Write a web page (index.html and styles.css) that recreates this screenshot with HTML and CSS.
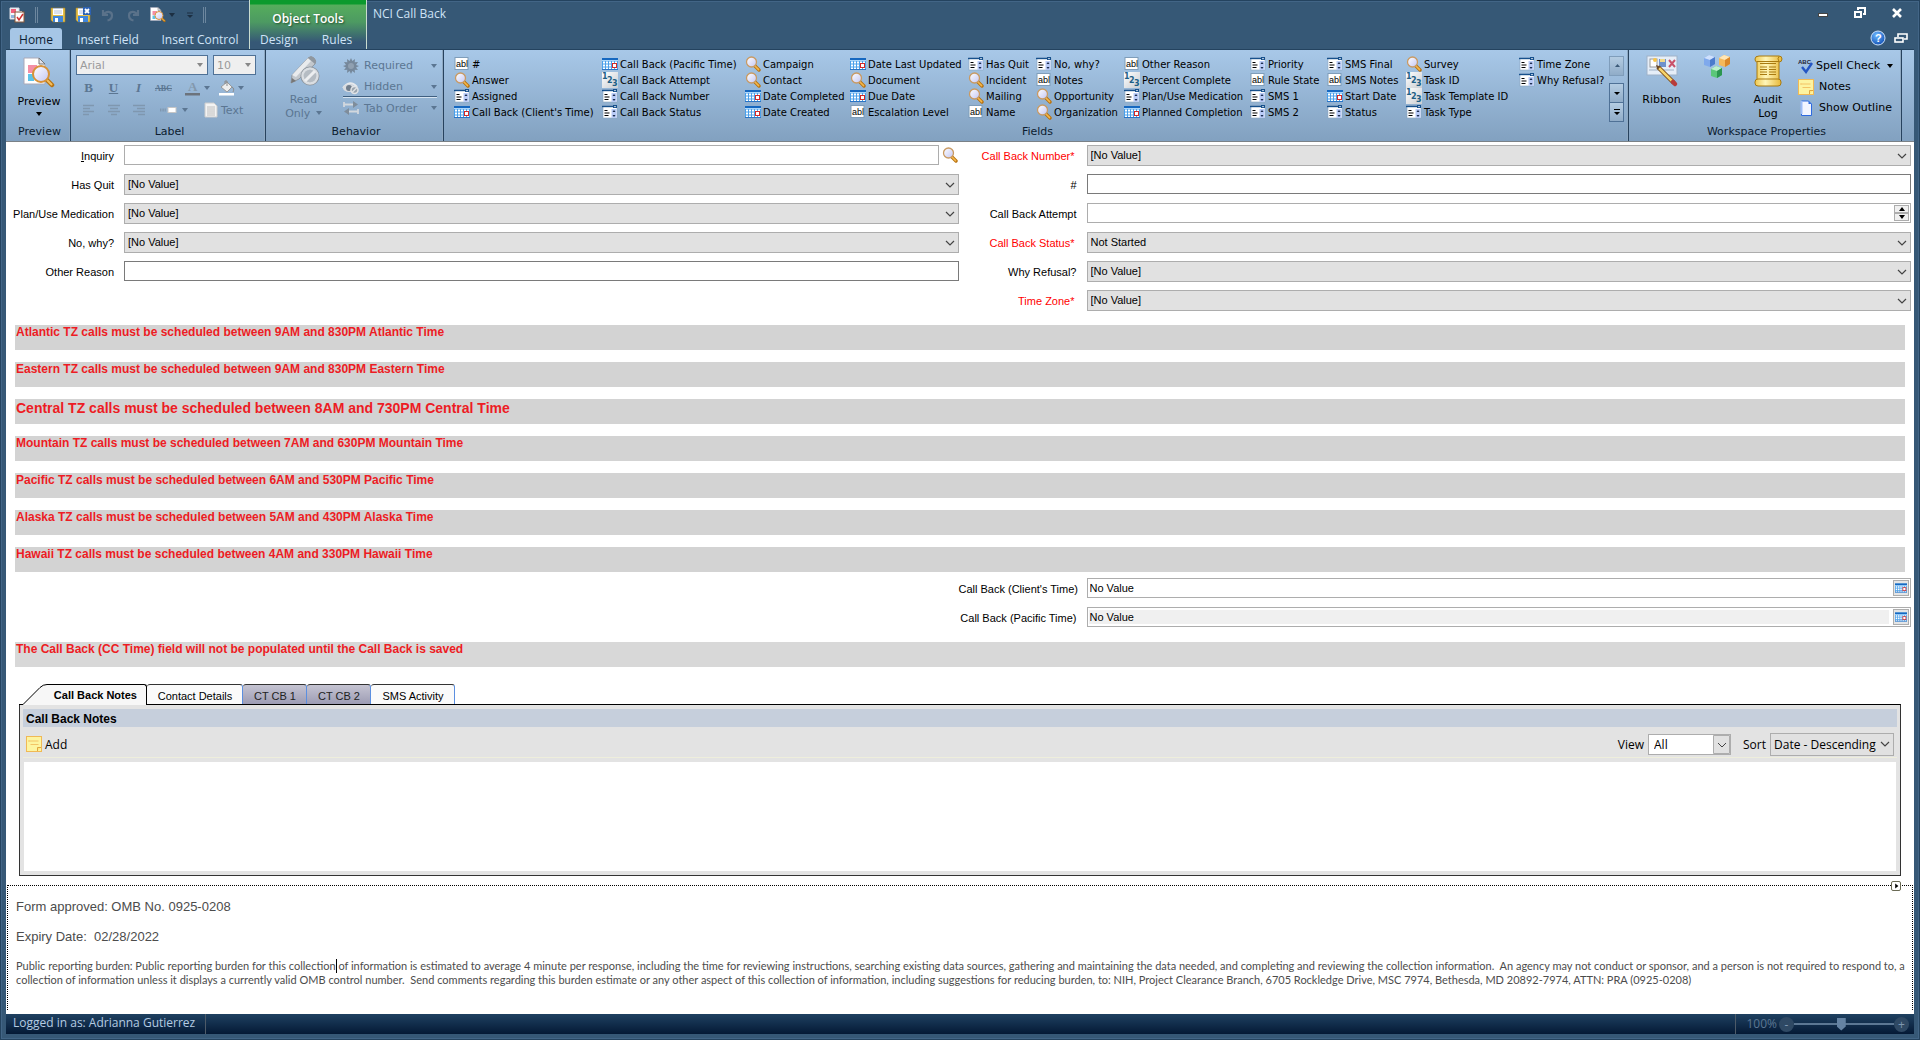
FILE: index.html
```html
<!DOCTYPE html>
<html lang="en">
<head>
    <meta charset="UTF-8">
    <meta name="viewport" content="width=device-width, initial-scale=1.0">
    <title>NCI Call Back</title>
    <link rel="stylesheet" href="styles.css">
</head>
<body>
    <!-- shared icons -->
    <svg class="sprite" aria-hidden="true">
        <defs>
            <linearGradient id="gLens" x1="0" y1="0" x2="1" y2="1"><stop offset="0" stop-color="#fff"/><stop offset="1" stop-color="#c3c6f4"/></linearGradient>
            <linearGradient id="gGray" x1="0" y1="0" x2="1" y2="1"><stop offset="0" stop-color="#fff"/><stop offset="1" stop-color="#c9cdd2"/></linearGradient>
            <linearGradient id="gGold" x1="0" y1="0" x2="1" y2="0"><stop offset="0" stop-color="#efc84f"/><stop offset=".4" stop-color="#fff6b8"/><stop offset="1" stop-color="#e8b93a"/></linearGradient>
            <radialGradient id="gHelp" cx=".4" cy=".3" r=".8"><stop offset="0" stop-color="#6db8ff"/><stop offset="1" stop-color="#0a48b0"/></radialGradient>
        </defs>
        <symbol id="abl" viewBox="0 0 16 16">
            <rect x="1" y="1.500" width="13" height="12" fill="#fff" stroke="#7f9db9"/>
            <text x="2" y="11" font-family="Liberation Sans" font-size="9" fill="#000">abl</text>
        </symbol>
        <symbol id="lens" viewBox="0 0 16 16">
            <path d="M9.500 9.500L14 14" stroke="#b8720f" stroke-width="3.400" stroke-linecap="round"/>
            <path d="M9.500 9.500L13.600 13.600" stroke="#f5b84d" stroke-width="1.500" stroke-linecap="round"/>
            <circle cx="6.500" cy="6" r="5" fill="url(#gLens)" stroke="#c99a62" stroke-width="1.300"/>
        </symbol>
        <symbol id="combo" viewBox="0 0 16 16">
            <rect x="1" y="2" width="14" height="12" fill="#fff" stroke="#8ba4bd" stroke-width=".6"/>
            <path d="M0 2.500h15" stroke="#16508c" stroke-width="1.400"/>
            <rect x="11" y="1" width="4" height="3" fill="#16508c"/>
            <path d="M12 2h2l-1 1.400z" fill="#fff"/>
            <rect x="9.500" y="5" width="5" height="9" fill="#b9cbf7"/>
            <path d="M10.500 8l1.500-2 1.500 2zM10.500 11l1.500 2 1.500-2z" fill="#1a2a4a"/>
            <path d="M2.500 6.500h3M2.500 9h5M2.500 11.500h4" stroke="#000" stroke-width="1.200"/>
        </symbol>
        <symbol id="cal" viewBox="0 0 16 16">
            <rect x="0" y="2" width="16" height="12" fill="#4ba0ea"/>
            <rect x="0" y="2" width="16" height="2" fill="#1668c0"/>
            <rect x="0" y="4" width="16" height="1" fill="#a9d6fb"/>
            <path d="M1 6.500h14M1 9.500h14M1 12.500h14" stroke="#fff" stroke-width="2" stroke-dasharray="2 1"/>
            <rect x="10.500" y="7.500" width="4" height="4" fill="#fff" stroke="#d42a2a"/>
            <path d="M0 13.500h16" stroke="#2b74c4"/>
        </symbol>
        <symbol id="num" viewBox="0 0 16 16">
            <rect width="16" height="16" fill="url(#gGray)"/>
            <g font-family="DejaVu Sans" font-weight="bold" font-size="8" fill="#1d5f86">
                <text x="0" y="7">1</text><text x="5" y="11">2</text><text x="10" y="14">3</text>
            </g>
        </symbol>
        <symbol id="note" viewBox="0 0 16 16">
            <rect x=".5" y=".5" width="15" height="15" fill="#fdf4a0" stroke="#f0b955"/>
            <path d="M3.500 5h9M4.500 8.500h8M3 4v2" stroke="#f3c466" fill="none"/>
            <path d="M11.500 15v-3.500H15" stroke="#e0a640" fill="#ffe680"/>
        </symbol>
        <symbol id="page-lens" viewBox="0 0 32 32">
            <path d="M1 1h15l6 6v20H1z" fill="#fff" stroke="#a9a9b8"/>
            <path d="M16 1v6h6z" fill="#e2e2ea" stroke="#777"/>
            <rect x="5" y="8" width="9" height="8" fill="#f48fa6"/>
            <rect x="5" y="17" width="6" height="7" fill="#5cc3e8"/>
            <path d="M24 23l5 5" stroke="#b8720f" stroke-width="4.500" stroke-linecap="round"/>
            <path d="M24 23l4.500 4.500" stroke="#f5c060" stroke-width="2" stroke-linecap="round"/>
            <circle cx="18" cy="17" r="8" fill="url(#gLens)" stroke="#d79238" stroke-width="2"/>
        </symbol>
        <symbol id="floppy" viewBox="0 0 16 16">
            <path d="M1 1h14v14H3l-2-2z" fill="#e3bf4a" stroke="#a98526" stroke-width=".6"/>
            <rect x="3" y="1" width="10" height="7" fill="#fff"/>
            <path d="M3 1.500h10M4 4h8M4 6h8" stroke="#b7c4dc"/>
            <rect x="3" y="9" width="10" height="6" fill="#3f86dc"/>
            <rect x="5" y="11" width="3" height="4" fill="#fff"/>
        </symbol>
        <symbol id="down" viewBox="0 0 6 4"><path d="M0 0h6L3 4z" fill="currentColor"/></symbol>
        <symbol id="lines-l" viewBox="0 0 14 12"><path d="M1 1.500h11M1 4.500h7M1 7.500h11M1 10.500h6" stroke="#7f97af" stroke-width="1.500"/></symbol>
        <symbol id="lines-c" viewBox="0 0 14 12"><path d="M1 1.500h12M3 4.500h8M1 7.500h12M4 10.500h6" stroke="#7f97af" stroke-width="1.500"/></symbol>
        <symbol id="lines-r" viewBox="0 0 14 12"><path d="M1 1.500h12M5 4.500h8M1 7.500h12M6 10.500h7" stroke="#7f97af" stroke-width="1.500"/></symbol>
    </svg>

    <div class="window">
        <header class="titlebar">
            <div class="title-left">
                <div class="quick">
                    <svg class="i16" viewBox="0 0 16 16"><path d="M1 1h9v11H1z" fill="#f6f8fb" stroke="#d8dbe2"/><rect x="2" y="2" width="5" height="4" fill="#f0607c"/><rect x="2" y="8" width="4" height="3" fill="#8fb5df"/><rect x="6" y="5" width="9" height="10" fill="#fff" stroke="#8b5a3a"/><rect x="8" y="4" width="5" height="2" fill="#b9a79a"/><path d="M8 10l2 3 4-6" fill="none" stroke="#d03030" stroke-width="1.500"/></svg>
                    <span class="grip"></span>
                    <button title="Save"><svg class="i16"><use href="#floppy"/></svg></button>
                    <button title="Save and Close"><svg class="i16" viewBox="0 0 16 16"><use href="#floppy"/><rect x="8" y="0" width="8" height="8" fill="#2c62b4"/><path d="M10 2l4 4M14 2l-4 4" stroke="#fff" stroke-width="1.800"/></svg></button>
                    <button title="Undo"><svg class="i16" viewBox="0 0 16 16"><path d="M3 3v5h5M3.500 8C6 3.500 12 4 12 8.500c0 3-2 4.500-4.500 5" fill="none" stroke="#5a728a" stroke-width="2.200"/></svg></button>
                    <button title="Redo"><svg class="i16" viewBox="0 0 16 16"><path d="M13 3v5H8M12.500 8C10 3.500 4 4 4 8.500c0 3 2 4.500 4.500 5" fill="none" stroke="#5a728a" stroke-width="2.200"/></svg></button>
                    <button title="Preview" class="split"><svg class="i16"><use href="#page-lens"/></svg><svg class="arrow dark"><use href="#down"/></svg></button>
                    <button title="Customize" class="more"><svg viewBox="0 0 6 7"><path d="M0 1h6" stroke="#1c2f42"/><path d="M0 3h6L3 6z" fill="#1c2f42"/></svg></button>
                    <span class="grip"></span>
                </div>
                <nav class="tabs">
                    <button class="tab active">Home</button>
                    <button class="tab">Insert Field</button>
                    <button class="tab">Insert Control</button>
                </nav>
            </div>
            <div class="context">
                <span class="context-title">Object Tools</span>
                <nav class="context-tabs">
                    <button class="tab">Design</button>
                    <button class="tab">Rules</button>
                </nav>
            </div>
            <h1>NCI Call Back</h1>
            <div class="title-right">
                <div class="win-buttons">
                    <button title="Minimize"><svg class="i14" viewBox="0 0 14 14"><rect x="2.500" y="7.500" width="9" height="3" fill="#fff" stroke="#444"/></svg></button>
                    <button title="Restore"><svg class="i14" viewBox="0 0 14 14"><path d="M5 4V2h7v6h-2" fill="none" stroke="#fff" stroke-width="2"/><rect x="2" y="6" width="6" height="5" fill="none" stroke="#fff" stroke-width="2"/></svg></button>
                    <button title="Close"><svg class="i14" viewBox="0 0 14 14"><path d="M3 3l8 8M11 3l-8 8" stroke="#fff" stroke-width="2.600"/></svg></button>
                </div>
                <div class="help-buttons">
                    <button title="Help"><svg class="i16" viewBox="0 0 16 16"><circle cx="8" cy="8" r="7" fill="url(#gHelp)" stroke="#cfe4fb"/><text x="5" y="12" font-family="Liberation Sans" font-weight="bold" font-size="11" fill="#fff">?</text></svg></button>
                    <button title="Restore Window"><svg class="i14" viewBox="0 0 14 14"><path d="M4 6V3h9v5h-3" fill="none" stroke="#fff" stroke-width="1.600"/><rect x="1" y="7" width="8" height="4" fill="none" stroke="#fff" stroke-width="1.600"/></svg></button>
                </div>
            </div>
        </header>

        <section class="ribbon">
            <div class="group g-preview">
                <button class="big">
                    <svg class="i32"><use href="#page-lens"/></svg>
                    <span>Preview</span>
                    <svg class="arrow"><use href="#down"/></svg>
                </button>
                <div class="group-name">Preview</div>
            </div>

            <div class="group g-label off">
                <div class="label-tools">
                    <div class="tool-row">
                        <select class="font-select family" disabled aria-label="Font"><option>Arial</option></select>
                        <select class="font-select size" disabled aria-label="Font size"><option>10</option></select>
                    </div>
                    <div class="tool-row format">
                        <button disabled class="letter"><b>B</b></button>
                        <button disabled class="letter"><u>U</u></button>
                        <button disabled class="letter"><i>I</i></button>
                        <button disabled class="letter abc"><s>ABC</s></button>
                        <button disabled class="color" title="Font Color"><svg class="i16" viewBox="0 0 16 16"><text x="3" y="11" font-family="Liberation Serif" font-size="13" font-weight="bold" fill="#8398ad">A</text><rect x="0" y="13" width="15" height="2.500" fill="#6c737c"/></svg><svg class="arrow"><use href="#down"/></svg></button>
                        <button disabled class="color" title="Fill Color"><svg class="i16" viewBox="0 0 16 16"><path d="M2 7l6-5 5 5-5 5z" fill="#eee" stroke="#999"/><path d="M6 4V1h2v5M13 7c2 1 2 3 1 5" fill="none" stroke="#8a8a8a"/><rect x="0" y="13" width="15" height="2.500" fill="#fff"/></svg><svg class="arrow"><use href="#down"/></svg></button>
                    </div>
                    <div class="tool-row format">
                        <button disabled class="letter" title="Left"><svg class="lines"><use href="#lines-l"/></svg></button>
                        <button disabled class="letter" title="Center"><svg class="lines"><use href="#lines-c"/></svg></button>
                        <button disabled class="letter" title="Right"><svg class="lines"><use href="#lines-r"/></svg></button>
                        <button disabled class="position" title="Label Position"><svg class="i16" viewBox="0 0 16 16"><path d="M0 8h6" stroke="#7f97af" stroke-width="3" stroke-dasharray="1 .6"/><rect x="8" y="5.500" width="8" height="5" fill="#fff" stroke="#c6c6c6"/></svg><svg class="arrow"><use href="#down"/></svg></button>
                        <button disabled class="text-button"><svg class="i16" viewBox="0 0 16 16"><path d="M2 1h9l3 3v11H2z" fill="#f3f3f3" stroke="#ccc"/><path d="M4 5h8M4 7h8M4 9h8M4 11h8M4 13h8" stroke="#b0b0b0" stroke-width=".8"/></svg>Text</button>
                    </div>
                </div>
                <div class="group-name">Label</div>
            </div>

            <div class="group g-behavior off">
                <div class="group-body">
                    <button class="big" disabled>
                        <svg class="i32" viewBox="0 0 32 32"><path d="M4 20L20 3q3-3 6 0t1 6L11 24l-8 4z" fill="#c3c8cd" stroke="#8f979f"/><path d="M4 20L20 3l3 3L8 22z" fill="#e9ebed"/><path d="M20 3q3-3 6 0t1 6z" fill="#8f979f"/><path d="M3 28l1-5 4 3z" fill="#777"/><circle cx="22" cy="21" r="8" fill="#b5bcc3" stroke="#8a929a" stroke-width="3"/><circle cx="22" cy="21" r="7.500" fill="none" stroke="#dadee2" stroke-width="2.500"/><path d="M17 26L27 16" stroke="#eceef0" stroke-width="3"/></svg>
                        <span>Read</span>
                        <span>Only <svg class="arrow"><use href="#down"/></svg></span>
                    </button>
                    <div class="stack">
                        <button class="row" disabled><svg class="i16" viewBox="0 0 16 16"><path d="M8 0l1.400 3L12 1l-.3 3.300L15 4l-2 3 3 1-3 1.500L15 12l-3.300-.3L12 15l-2.600-2L8 16l-1.400-3L4 15l.3-3.300L1 12l2-2.500L0 8l3-1-2-3 3.300.3L4 1l2.600 2z" fill="#76889b"/><circle cx="8" cy="8" r="3" fill="#90a0b1"/></svg><span>Required</span><svg class="arrow"><use href="#down"/></svg></button>
                        <button class="row" disabled><svg class="i16" viewBox="0 0 16 16"><path d="M0 9q7-9 14-1" fill="none" stroke="#e6e9ec" stroke-width="2"/><ellipse cx="6" cy="9" rx="6" ry="4" fill="#d9dce0"/><circle cx="6" cy="9" r="3" fill="#717e8c"/><circle cx="11.500" cy="11" r="3.500" fill="#9aa4ae" stroke="#e0e3e6" stroke-width="1.500"/><path d="M9 13.500l5-5" stroke="#e0e3e6" stroke-width="1.500"/></svg><span>Hidden</span><svg class="arrow"><use href="#down"/></svg></button>
                        <button class="row tab-order" disabled><svg class="i16" viewBox="0 0 16 16"><path d="M1 2v5M1 4.500h10M15 9v5M15 11.500H5" fill="none" stroke="#d2d8de" stroke-width="1.800"/><path d="M10 1l5 3.500L10 8zM6 8v7l-5-3.500z" fill="#7f8d9b"/></svg><span>Tab Order</span><svg class="arrow"><use href="#down"/></svg></button>
                    </div>
                </div>
                <div class="group-name">Behavior</div>
            </div>

            <div class="group g-fields">
                <div class="group-body">
                    <div class="fields">
                        <button><svg><use href="#abl"/></svg>#</button>
                        <button><svg><use href="#lens"/></svg>Answer</button>
                        <button><svg><use href="#combo"/></svg>Assigned</button>
                        <button><svg><use href="#cal"/></svg>Call Back (Client's Time)</button>
                        <button><svg><use href="#cal"/></svg>Call Back (Pacific Time)</button>
                        <button><svg><use href="#num"/></svg>Call Back Attempt</button>
                        <button><svg><use href="#combo"/></svg>Call Back Number</button>
                        <button><svg><use href="#combo"/></svg>Call Back Status</button>
                        <button><svg><use href="#lens"/></svg>Campaign</button>
                        <button><svg><use href="#lens"/></svg>Contact</button>
                        <button><svg><use href="#cal"/></svg>Date Completed</button>
                        <button><svg><use href="#cal"/></svg>Date Created</button>
                        <button><svg><use href="#cal"/></svg>Date Last Updated</button>
                        <button><svg><use href="#lens"/></svg>Document</button>
                        <button><svg><use href="#cal"/></svg>Due Date</button>
                        <button><svg><use href="#abl"/></svg>Escalation Level</button>
                        <button><svg><use href="#combo"/></svg>Has Quit</button>
                        <button><svg><use href="#lens"/></svg>Incident</button>
                        <button><svg><use href="#lens"/></svg>Mailing</button>
                        <button><svg><use href="#abl"/></svg>Name</button>
                        <button><svg><use href="#combo"/></svg>No, why?</button>
                        <button><svg><use href="#abl"/></svg>Notes</button>
                        <button><svg><use href="#lens"/></svg>Opportunity</button>
                        <button><svg><use href="#lens"/></svg>Organization</button>
                        <button><svg><use href="#abl"/></svg>Other Reason</button>
                        <button><svg><use href="#num"/></svg>Percent Complete</button>
                        <button><svg><use href="#combo"/></svg>Plan/Use Medication</button>
                        <button><svg><use href="#cal"/></svg>Planned Completion</button>
                        <button><svg><use href="#combo"/></svg>Priority</button>
                        <button><svg><use href="#abl"/></svg>Rule State</button>
                        <button><svg><use href="#combo"/></svg>SMS 1</button>
                        <button><svg><use href="#combo"/></svg>SMS 2</button>
                        <button><svg><use href="#combo"/></svg>SMS Final</button>
                        <button><svg><use href="#abl"/></svg>SMS Notes</button>
                        <button><svg><use href="#cal"/></svg>Start Date</button>
                        <button><svg><use href="#combo"/></svg>Status</button>
                        <button><svg><use href="#lens"/></svg>Survey</button>
                        <button><svg><use href="#num"/></svg>Task ID</button>
                        <button><svg><use href="#num"/></svg>Task Template ID</button>
                        <button><svg><use href="#combo"/></svg>Task Type</button>
                        <button><svg><use href="#combo"/></svg>Time Zone</button>
                        <button><svg><use href="#combo"/></svg>Why Refusal?</button>
                    </div>
                    <div class="scroller">
                        <button class="up" title="Up"><svg viewBox="0 0 8 8"><path d="M2 5h5L4.500 2z" fill="#3c5a78"/></svg></button>
                        <button title="Down"><svg viewBox="0 0 8 8"><path d="M1 3h6L4 6z"/></svg></button>
                        <button title="More"><svg viewBox="0 0 8 8"><path d="M1 1h6v1H1zM1 4h6L4 7z"/></svg></button>
                    </div>
                </div>
                <div class="group-name">Fields</div>
            </div>

            <div class="group g-workspace">
                <div class="group-body">
                    <button class="big">
                        <svg class="i32" viewBox="0 0 32 32"><rect x="1" y="1" width="30" height="19" fill="#e6eef8" stroke="#9fb2c8"/><rect x="4" y="4" width="7" height="8" fill="#fff" stroke="#999"/><circle cx="9" cy="5" r="2" fill="#f7c548"/><rect x="13" y="4" width="7" height="8" fill="#6f91cc"/><rect x="14" y="4" width="5" height="3" fill="#f1d98a"/><path d="M23 5l6 7M29 5l-6 7" stroke="#c9526a" stroke-width="2"/><path d="M3 15h25" stroke="#9fb2c8"/><path d="M12 12l16 16" stroke="#7b4a12" stroke-width="4.500"/><path d="M13 13l14 14" stroke="#f6d46b" stroke-width="2.500"/><path d="M10 10l4.500 1.500-3 3z" fill="#6b4a2a"/><path d="M27 27l2 2" stroke="#b83b3b" stroke-width="4.500" stroke-linecap="round"/></svg>
                        <span>Ribbon</span>
                    </button>
                    <button class="big">
                        <svg class="i32" viewBox="0 0 32 32"><path d="M3 3l5-3 6 2v7l-5 3-6-2z" fill="#7fa9ec"/><path d="M3 3l6 2 5-3-6-2z" fill="#cfe0fc"/><path d="M9 5v7l5-3V2z" fill="#4c7bcc"/><path d="M18 3l5-3 6 2v7l-5 3-6-2z" fill="#f5b95c"/><path d="M18 3l6 2 5-3-6-2z" fill="#ffe6b5"/><path d="M24 5v7l5-3V2z" fill="#d9872a"/><path d="M10 14l5-3 6 2v7l-5 3-6-2z" fill="#5bc77a"/><path d="M10 14l6 2 5-3-6-2z" fill="#bff0cb"/><path d="M16 16v7l5-3v-7z" fill="#2b9650"/></svg>
                        <span>Rules</span>
                    </button>
                    <button class="big">
                        <svg class="i32" viewBox="0 0 32 32"><path d="M3 4q0-3 4-3h20q3 0 3 3t-3 3v19H5V7q-2 0-2-3z" fill="url(#gGold)" stroke="#a87a10"/><path d="M5 6.500h22" stroke="#a87a10"/><path d="M27 1.500q-2 2 0 5" fill="none" stroke="#a87a10"/><rect x="3" y="24" width="26" height="7" rx="3" fill="url(#gGold)" stroke="#a87a10"/><path d="M8 8.500h16M8 12h7M17 12h7M8 14.500h7M17 14.500h7M8 17h7M17 17h7M8 19.500h7M17 19.500h7" stroke="#a87a10"/></svg>
                        <span>Audit</span>
                        <span>Log</span>
                    </button>
                    <div class="stack">
                        <button class="row spell"><svg class="i16" viewBox="0 0 16 16"><text x="0" y="6" font-family="Liberation Sans" font-weight="bold" font-size="6" fill="#223">ABC</text><path d="M4 9l4 5 6-9" fill="none" stroke="#2456c4" stroke-width="2.400"/></svg><span>Spell Check</span><svg class="arrow"><use href="#down"/></svg></button>
                        <button class="row"><svg class="i16"><use href="#note"/></svg><span>Notes</span></button>
                        <button class="row"><svg class="i16" viewBox="0 0 16 16"><path d="M3.500 1h7l3 3v11.500h-10z" fill="#f2f5ff" stroke="#2d6ae0"/><path d="M3.500 1v13" stroke="#9dbcf7" stroke-width="2"/><path d="M10.500 1v3h3z" fill="#2d6ae0"/></svg><span>Show Outline</span></button>
                    </div>
                </div>
                <div class="group-name">Workspace Properties</div>
            </div>
        </section>

        <main>
            <div class="form">
                <div class="column left">
                    <label for="inquiry"><u>I</u>nquiry</label>
                    <div class="lookup"><input type="text" id="inquiry" class="soft"><button title="Search"><svg class="i16"><use href="#lens"/></svg></button></div>
                    <label for="hasQuit">Has Quit</label>
                    <select id="hasQuit"><option>[No Value]</option></select>
                    <label for="medication">Plan/Use Medication</label>
                    <select id="medication"><option>[No Value]</option></select>
                    <label for="noWhy">No, why?</label>
                    <select id="noWhy"><option>[No Value]</option></select>
                    <label for="otherReason">Other Reason</label>
                    <input type="text" id="otherReason">
                </div>
                <div class="column right">
                    <label for="cbNumber" class="required">Call Back Number*</label>
                    <select id="cbNumber"><option>[No Value]</option></select>
                    <label for="number">#</label>
                    <input type="text" id="number">
                    <label for="attempt">Call Back Attempt</label>
                    <div class="boxed">
                        <input type="text" id="attempt">
                        <span class="spin">
                            <button title="Increase"><svg viewBox="0 0 6 4"><path d="M0 4h6L3 0z"/></svg></button>
                            <button title="Decrease"><svg viewBox="0 0 6 4"><path d="M0 0h6L3 4z"/></svg></button>
                        </span>
                    </div>
                    <label for="cbStatus" class="required">Call Back Status*</label>
                    <select id="cbStatus"><option>Not Started</option></select>
                    <label for="refusal">Why Refusal?</label>
                    <select id="refusal"><option>[No Value]</option></select>
                    <label for="timeZone" class="required">Time Zone*</label>
                    <select id="timeZone"><option>[No Value]</option></select>
                </div>
            </div>

            <div class="banners">
                <p>Atlantic TZ calls must be scheduled between 9AM and 830PM Atlantic Time</p>
                <p>Eastern TZ calls must be scheduled between 9AM and 830PM Eastern Time</p>
                <p class="large">Central TZ calls must be scheduled between 8AM and 730PM Central Time</p>
                <p>Mountain TZ calls must be scheduled between 7AM and 630PM Mountain Time</p>
                <p>Pacific TZ calls must be scheduled between 6AM and 530PM Pacific Time</p>
                <p>Alaska TZ calls must be scheduled between 5AM and 430PM Alaska Time</p>
                <p>Hawaii TZ calls must be scheduled between 4AM and 330PM Hawaii Time</p>
            </div>

            <div class="form dates">
                <div class="column left"></div>
                <div class="column right">
                    <label for="clientTime">Call Back (Client's Time)</label>
                    <div class="boxed"><input type="text" id="clientTime" value="No Value"><button class="pick" title="Calendar"><svg><use href="#cal"/></svg></button></div>
                    <label for="pacificTime">Call Back (Pacific Time)</label>
                    <div class="boxed"><input type="text" id="pacificTime" value="No Value" readonly><button class="pick" title="Calendar"><svg><use href="#cal"/></svg></button></div>
                </div>
            </div>

            <div class="banners saved">
                <p>The Call Back (CC Time) field will not be populated until the Call Back is saved</p>
            </div>

            <section class="notes">
                <nav class="note-tabs">
                    <button class="current"><svg viewBox="0 0 28 21"><path d="M0 21L4 20.500 20 4q4-3.500 8-3.500V21z" fill="#f7f7f7"/><path d="M0 20.500h4L21 3.500Q24 .5 28 .5" fill="none" stroke="#000"/></svg><span>Call Back Notes</span></button>
                    <button>Contact Details</button>
                    <button class="shaded">CT CB 1</button>
                    <button class="shaded">CT CB 2</button>
                    <button>SMS Activity</button>
                </nav>
                <div class="note-panel">
                    <h2>Call Back Notes</h2>
                    <div class="note-bar">
                        <button class="add"><svg class="i16"><use href="#note"/></svg>Add</button>
                        <label for="view">View</label>
                        <select id="view" class="view"><option>All</option></select>
                        <label for="sort">Sort</label>
                        <select id="sort" class="sort"><option>Date - Descending</option></select>
                    </div>
                    <div class="note-list"></div>
                </div>
            </section>

            <section class="legal">
                <button class="handle" title="Expand"><svg viewBox="0 0 10 10"><path d="M4 2v6l4-3z"/></svg></button>
                <p>Form approved: OMB No. 0925-0208</p>
                <p>Expiry Date: &nbsp;02/28/2022</p>
                <p class="small">Public reporting burden: Public reporting burden for this collection<span class="caret"></span> of information is estimated to average 4 minute per response, including the time for reviewing instructions, searching existing data sources, gathering and maintaining the data needed, and completing and reviewing the collection information. &nbsp;An agency may not conduct or sponsor, and a person is not required to respond to, a collection of information unless it displays a currently valid OMB control number. &nbsp;Send comments regarding this burden estimate or any other aspect of this collection of information, including suggestions for reducing burden, to: NIH, Project Clearance Branch, 6705 Rockledge Drive, MSC 7974, Bethesda, MD 20892-7974, ATTN: PRA (0925-0208)</p>
            </section>
        </main>

        <footer class="status">
            <span class="user">Logged in as: Adrianna Gutierrez</span>
            <div class="zoom">
                <label for="zoom">100%</label>
                <button title="Zoom out">-</button>
                <input type="range" id="zoom" min="0" max="100" value="47">
                <button title="Zoom in">+</button>
            </div>
        </footer>
    </div>
</body>
</html>
```
FILE: styles.css
```css
* {
    box-sizing: border-box;
}
body {
    margin: 0;
    font-family: "Liberation Sans", Arial, sans-serif;
    font-size: 11px;
    color: #000;
}
button, input, select {
    margin: 0;
    padding: 0;
    font: inherit;
    color: inherit;
    border: none;
    border-radius: 0;
    background: none;
    outline: none;
}
button {
    display: flex;
    align-items: center;
    white-space: nowrap;
}
h1, h2, p {
    margin: 0;
}
svg {
    display: block;
    flex: none;
    overflow: visible;
}
.sprite {
    position: absolute;
    width: 0;
    height: 0;
}
.i14 {
    width: 14px;
    height: 14px;
}
.i16 {
    width: 16px;
    height: 16px;
}
.i32 {
    width: 32px;
    height: 32px;
}
.arrow {
    width: 6px;
    height: 4px;
}
.dark {
    color: #1c2f42;
}
.window {
    display: flex;
    flex-direction: column;
    min-height: 100vh;
    padding: 0 6px 6px;
    background: #365876;
    box-shadow: inset 0 0 0 1px #24435f, inset 0 0 0 2px #426586;
}

/* title bar */
.titlebar {
    display: flex;
    height: 50px;
    font-family: "Open Sans", sans-serif;
    font-size: 12px;
    color: #cfe3f7;
    border-bottom: 1px solid #24435f;
}
.title-left {
    display: flex;
    flex-direction: column;
    justify-content: space-between;
    width: 243px;
}
.quick {
    display: flex;
    align-items: center;
    gap: 9px;
    height: 28px;
    padding: 2px 0 0 3px;
}
.grip {
    width: 3px;
    height: 16px;
    margin: 0 3px 0 1px;
    border: solid #6d879f;
    border-width: 0 1px;
}
.split {
    gap: 3px;
}
.more svg {
    width: 6px;
    height: 7px;
    margin-left: 3px;
}
.tabs {
    display: flex;
    padding-left: 4px;
}
.tab {
    justify-content: center;
    width: 92px;
    height: 21px;
    padding-top: 2px;
}
.tab.active {
    width: 52px;
    color: #0c1c30;
    background: #a6c6e6;
    border-radius: 3px 3px 0 0;
}
.context {
    display: flex;
    flex-direction: column;
    justify-content: space-between;
    width: 118px;
    border: solid #c9dcd0;
    border-width: 0 1px;
    background: linear-gradient(#0b9a2d 4px, #55ad5c 5px, #4d9a62 22px, #365876 42px);
}
.context-title {
    padding-top: 10px;
    text-align: center;
    line-height: 18px;
    font-weight: 600;
    color: #fff;
    text-shadow: 1px 1px 2px #23502f;
}
.context-tabs {
    display: flex;
}
.context-tabs .tab {
    flex: 1;
}
h1 {
    flex: 1;
    padding-left: 6px;
    font-size: 12px;
    font-weight: normal;
    line-height: 28px;
}
.title-right {
    display: flex;
    flex-direction: column;
    align-items: flex-end;
    padding-right: 6px;
}
.win-buttons {
    display: flex;
    gap: 23px;
    padding: 6px 4px 0 0;
}
.help-buttons {
    display: flex;
    align-items: center;
    gap: 8px;
    padding-top: 10px;
}

/* ribbon */
.ribbon {
    display: flex;
    height: 92px;
    padding-right: 12px;
    font-family: "DejaVu Sans", Verdana, sans-serif;
    background: linear-gradient(#a8c8e8, #82a1c0);
    border-bottom: 1px solid #7a8187;
}
.group {
    display: flex;
    flex-direction: column;
    justify-content: space-between;
    border-right: 1px solid #27425e;
    box-shadow: inset -1px 0 #8fa9c2;
    padding-top: 5px;
}
.group-name {
    padding-left: 3px;
    text-align: center;
    line-height: 18px;
    color: #0c1c30;
}
.group-body {
    display: flex;
}
.off {
    color: #5b7692;
}
.g-preview {
    width: 65px;
}
.g-label {
    width: 195px;
}
.g-behavior {
    width: 178px;
}
.g-fields {
    flex: 1;
    min-width: 0;
}
.g-workspace {
    width: 273px;
}
.big {
    flex-direction: column;
    line-height: 14px;
}
.big .i32 {
    margin-bottom: 6px;
}
.big .arrow {
    display: inline-block;
    margin-top: 3px;
}
.g-preview .big {
    padding: 2px 0 0 2px;
}
.label-tools {
    padding-left: 5px;
}
.tool-row {
    display: flex;
    gap: 5px;
    height: 22px;
}
.font-select {
    appearance: none;
    height: 20px;
    padding-left: 3px;
    font-size: 11px;
    color: #9a9a9a;
    opacity: 1;
    border: 1px solid #4f7196;
    background: #efefef url("data:image/svg+xml,%3Csvg xmlns='http://www.w3.org/2000/svg' width='6' height='4'%3E%3Cpath d='M0 0h6L3 4z' fill='%23888'/%3E%3C/svg%3E") no-repeat right 4px center;
}
.family {
    width: 132px;
}
.size {
    width: 43px;
}
.format {
    gap: 0;
}
.letter {
    justify-content: center;
    width: 25px;
    font-family: "Liberation Serif", serif;
    font-size: 13px;
    font-weight: bold;
}
.abc {
    font-size: 8px;
}
.lines {
    width: 14px;
    height: 12px;
}
.color {
    gap: 3px;
    padding-left: 9px;
}
.position {
    gap: 6px;
    padding-left: 9px;
}
.text-button {
    gap: 2px;
    padding-left: 15px;
}
.g-behavior .group-body {
    gap: 18px;
    padding-left: 16px;
}
.g-behavior .big {
    width: 43px;
}
.g-behavior .big .arrow {
    margin: 0 0 2px 2px;
}
.stack {
    display: flex;
    flex-direction: column;
}
.row {
    gap: 5px;
    width: 94px;
    height: 21px;
}
.g-behavior .row .arrow {
    margin-left: auto;
}
.tab-order {
    border-top: 1px solid #d6e4f1;
    box-shadow: 0 -1px #3f5f80;
}
.g-fields .group-body {
    justify-content: space-between;
    padding: 1px 4px 0 10px;
}
.fields {
    display: grid;
    grid-auto-flow: column;
    grid-template-rows: repeat(4, 16px);
    grid-template-columns: 148px 143px 105px 118px 68px 88px 126px 77px 79px 113px 88px;
    font-size: 10px;
}
.fields button {
    gap: 2px;
}
.fields svg {
    width: 16px;
    height: 16px;
}
.scroller {
    display: flex;
    flex-direction: column;
    width: 15px;
}
.scroller button {
    justify-content: center;
    height: 20px;
    border: 1px solid #4f7196;
    background: linear-gradient(#b4cce2, #90acc8);
}
.scroller .up {
    margin-bottom: 7px;
    border-color: #7f9dbb;
}
.scroller button + button + button {
    margin-top: -1px;
}
.scroller svg {
    width: 8px;
    height: 8px;
}
.g-workspace .group-body {
    padding-left: 5px;
}
.g-workspace .big {
    width: 55px;
}
.g-workspace .big + .big + .big {
    width: 48px;
}
.g-workspace .stack {
    padding-left: 6px;
}
.g-workspace .row {
    width: auto;
}
.g-workspace .spell {
    gap: 2px;
}
.g-workspace .row .arrow {
    margin-left: 5px;
}

/* form */
main {
    display: flex;
    flex-direction: column;
    flex: 1;
    background: #fff;
}
.form {
    display: flex;
    padding-top: 3px;
}
.column {
    display: grid;
    flex: 1 0 0;
    grid-auto-rows: 21px;
    gap: 8px 0;
    align-content: start;
    align-items: start;
}
.left {
    grid-template-columns: 118px 1fr;
}
.right {
    grid-template-columns: 128px 1fr;
    margin-right: 3px;
}
.column label {
    padding: 4px 10px 0 0;
    text-align: right;
    line-height: 14px;
    white-space: nowrap;
}
.column .required {
    padding-right: 12px;
    color: #f00;
}
.column input {
    width: 100%;
    height: 20px;
    padding: 0 2px;
    border: 1px solid #7a7a7a;
    background: #fff;
}
.column .soft {
    border-color: #adadad;
}
select {
    appearance: none;
}
.column select, .sort {
    width: 100%;
    height: 21px;
    padding: 0 20px 1px 3px;
    border: 1px solid #adadad;
    background: #e1e1e1 url("data:image/svg+xml,%3Csvg xmlns='http://www.w3.org/2000/svg' width='10' height='6'%3E%3Cpath d='M1 1l4 4 4-4' fill='none' stroke='%23444' stroke-width='1.200'/%3E%3C/svg%3E") no-repeat right 3px center;
}
.lookup {
    display: flex;
    gap: 3px;
    padding-right: 1px;
}
.boxed {
    display: flex;
    align-items: center;
    height: 20px;
    padding: 1px;
    border: 1px solid #adadad;
}
.column .boxed input {
    height: 14px;
    padding: 0 1px;
    border: none;
}
.column .boxed input[readonly] {
    margin-right: 4px;
    background: #f0f0f0;
}
.spin {
    display: flex;
    flex-direction: column;
    width: 15px;
}
.spin button {
    justify-content: center;
    height: 8px;
    border: 1px solid #adadad;
    background: #f0f0f0;
}
.spin svg {
    width: 6px;
    height: 4px;
}
.pick {
    justify-content: center;
    flex: none;
    width: 16px;
    height: 16px;
    border: 1px solid #adadad;
    background: #e5e5e5;
}
.pick svg {
    width: 12px;
    height: 12px;
}

/* red reminders */
.banners {
    display: grid;
    gap: 12px;
    padding: 14px 9px 0;
}
.banners p {
    height: 25px;
    padding: 0 1px;
    font-size: 12px;
    font-weight: bold;
    line-height: 14px;
    color: #ed1c24;
    background: #d3d3d3;
}
.banners .large {
    font-size: 14px;
    line-height: 18px;
}
.dates {
    padding-top: 6px;
}
.banners.saved p {
    background: #d8d8d8;
}

/* notes */
.notes {
    padding: 17px 13px 0;
}
.note-tabs {
    display: flex;
}
.note-tabs button {
    justify-content: center;
    width: 64px;
    height: 20px;
    padding: 2px 0 0 1px;
    border: 1px solid #333;
    border-right-color: #5b8fe0;
    border-bottom: none;
    border-left: none;
    border-radius: 3px 3px 0 0;
    background: #fafafa;
}
.note-tabs button:nth-child(2) {
    width: 96px;
}
.note-tabs button:last-child {
    width: 84px;
}
.note-tabs .shaded {
    background: linear-gradient(#c5c4d2, #9d9cb4);
    color: #222;
}
.note-tabs .current {
    width: 128px;
    height: 21px;
    margin-bottom: -1px;
    padding: 0;
    z-index: 1;
    justify-content: flex-start;
    font-weight: bold;
    border: none;
    background: none;
}
.current svg {
    width: 28px;
    height: 21px;
}
.current span {
    flex: 1;
    height: 21px;
    padding: 0 9px 0 0;
    text-align: right;
    line-height: 21px;
    border-top: 1px solid #000;
    border-right: 1px solid #000;
    border-radius: 0 3px 0 0;
    background: #f7f7f7;
}
.note-panel {
    padding: 4px 3px;
    border: 1px solid #333;
    border-top-color: #000;
    background: #e3e3e3;
}
h2 {
    height: 18px;
    padding-left: 3px;
    font-size: 12px;
    line-height: 20px;
    background: #c6cfdc;
}
.note-bar {
    display: flex;
    align-items: center;
    height: 31px;
    padding: 6px 3px 2px;
    border-bottom: 1px solid #eeeedc;
    font-family: "Open Sans", sans-serif;
    font-size: 12px;
}
.add {
    gap: 3px;
    margin-right: auto;
}
.view {
    width: 83px;
    height: 21px;
    margin: 0 12px 0 4px;
    padding-left: 5px;
    border: 1px solid #adadad;
    background: #fff url("data:image/svg+xml,%3Csvg xmlns='http://www.w3.org/2000/svg' width='17' height='19'%3E%3Cpath d='M.5 .5h16v18H.5z' fill='%23e1e1e1' stroke='%23adadad'/%3E%3Cpath d='M5 8l4 4 4-4' fill='none' stroke='%23444'/%3E%3C/svg%3E") no-repeat right center;
}
.sort {
    width: 124px;
    height: 23px;
    margin-left: 4px;
    padding: 0 15px 0 3px;
}
.note-list {
    height: 109px;
    margin: 4px 1px 0;
    background: #fff;
}

/* approval text */
.legal {
    position: relative;
    flex: 1;
    margin: 9px 1px 4px;
    padding: 11px 0 0 8px;
    border: 1px dotted #000;
    border-bottom: none;
    color: #4c4c4c;
    font-size: 13px;
    line-height: 20px;
}
.legal p + p {
    margin-top: 10px;
}
.legal .small {
    padding-top: 2px;
    font-family: Lato, "Liberation Sans", sans-serif;
    font-size: 11px;
    line-height: 14px;
}
.caret {
    display: inline-block;
    width: 1px;
    height: 14px;
    margin-right: -1px;
    vertical-align: top;
    background: #000;
}
.handle {
    position: absolute;
    top: -5px;
    right: 11px;
    width: 10px;
    height: 10px;
    border: 1px solid #6b6b55;
    border-radius: 2px;
    background: #fff;
}
.handle svg {
    width: 8px;
    height: 8px;
}

/* status bar */
.status {
    display: flex;
    justify-content: space-between;
    height: 20px;
    font-family: "Open Sans", sans-serif;
    font-size: 12px;
    line-height: 18px;
    color: #b4cbe2;
    background: linear-gradient(#1f4161, #041935);
}
.user {
    padding: 0 10px 0 7px;
    border-right: 1px solid #4d5a68;
}
.zoom {
    display: flex;
    align-items: center;
    padding: 0 5px 0 10px;
    border-left: 1px solid #4d5a68;
    color: #5c7793;
}
.zoom label {
    margin-right: 2px;
}
.zoom button {
    justify-content: center;
    width: 15px;
    height: 15px;
    border-radius: 50%;
    line-height: 15px;
    color: #7e97b0;
    background: #2f4964;
}
.zoom input {
    appearance: none;
    width: 100px;
    height: 14px;
    background: linear-gradient(#5c7793, #5c7793) no-repeat center / 100% 2px;
}
.zoom input::-webkit-slider-thumb {
    appearance: none;
    width: 9px;
    height: 13px;
    background: #6583a3;
    clip-path: polygon(0 0, 100% 0, 100% 70%, 50% 100%, 0 70%);
}
```
